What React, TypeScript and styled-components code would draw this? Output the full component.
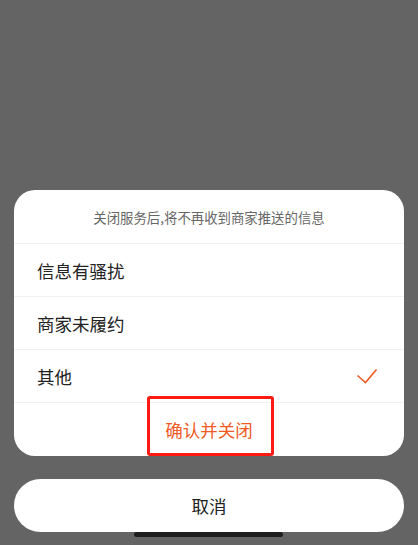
import React, {useState} from 'react';
import styled, {createGlobalStyle} from 'styled-components';

const GlobalStyle = createGlobalStyle`
    html, body {
        margin: 0;
        padding: 0;
        background: #646464;
    }
    body {
        font-family: "Noto Sans CJK SC", "Noto Sans", sans-serif;
    }
`;

const reasons = ['信息有骚扰', '商家未履约', '其他'];

const Screen = styled.div`
    height: 545px;
    display: flex;
    flex-direction: column;
    justify-content: flex-end;
    padding: 0 14px 13px;
    box-sizing: border-box;
    position: relative;
`;

const Card = styled.div`
    background: #fff;
    border-radius: 21px;
    overflow: hidden;
`;

const Header = styled.div`
    height: 53px;
    display: flex;
    align-items: center;
    justify-content: center;
    font-size: 13.4px;
    color: #666;
`;

const Row = styled.div`
    height: 53px;
    box-sizing: border-box;
    border-top: 1px solid #f1f1f1;
    display: flex;
    align-items: center;
    justify-content: space-between;
    padding: 0 26px 0 23px;
    font-size: 17.5px;
    color: #222;
    cursor: pointer;
`;

const Confirm = styled.div`
    position: relative;
    height: 54px;
    box-sizing: border-box;
    border-top: 1px solid #f1f1f1;
    display: flex;
    align-items: center;
    justify-content: center;
    font-size: 17.5px;
    color: #f05a24;
`;

const Highlight = styled.div`
    position: absolute;
    left: 133px;
    top: -7px;
    width: 127px;
    height: 60px;
    box-sizing: border-box;
    border: 3px solid #ff1a14;
    border-radius: 3px;
    pointer-events: none;
`;

const CancelButton = styled.button`
    margin-top: 23px;
    height: 53px;
    border: none;
    border-radius: 27px;
    background: #fff;
    font-family: inherit;
    font-size: 17.5px;
    color: #222;
    padding: 0;
`;

const HomeIndicator = styled.div`
    position: absolute;
    left: 134px;
    bottom: 8px;
    width: 149px;
    height: 5px;
    border-radius: 3px;
    background: #1e1e1e;
`;

const Check = () => (
    <svg width='22' height='16' viewBox='0 0 22 16'>
        <polyline
            points='1.5,7.5 9.5,14.5 20.5,1.5'
            fill='none'
            stroke='#f05a24'
            strokeWidth='1.6'
        />
    </svg>
);

export default function App() {
    const [selected, setSelected] = useState(2);

    return (
        <Screen>
            <GlobalStyle/>
            <Card>
                <Header>{'关闭服务后,将不再收到商家推送的信息'}</Header>
                {reasons.map((reason, i) => (
                    <Row
                        key={reason}
                        onClick={() => setSelected(i)}
                    >
                        <span>{reason}</span>
                        {selected === i && <Check/>}
                    </Row>
                ))}
                <Confirm>
                    {'确认并关闭'}
                    <Highlight/>
                </Confirm>
            </Card>
            <CancelButton>{'取消'}</CancelButton>
            <HomeIndicator/>
        </Screen>
    );
}
